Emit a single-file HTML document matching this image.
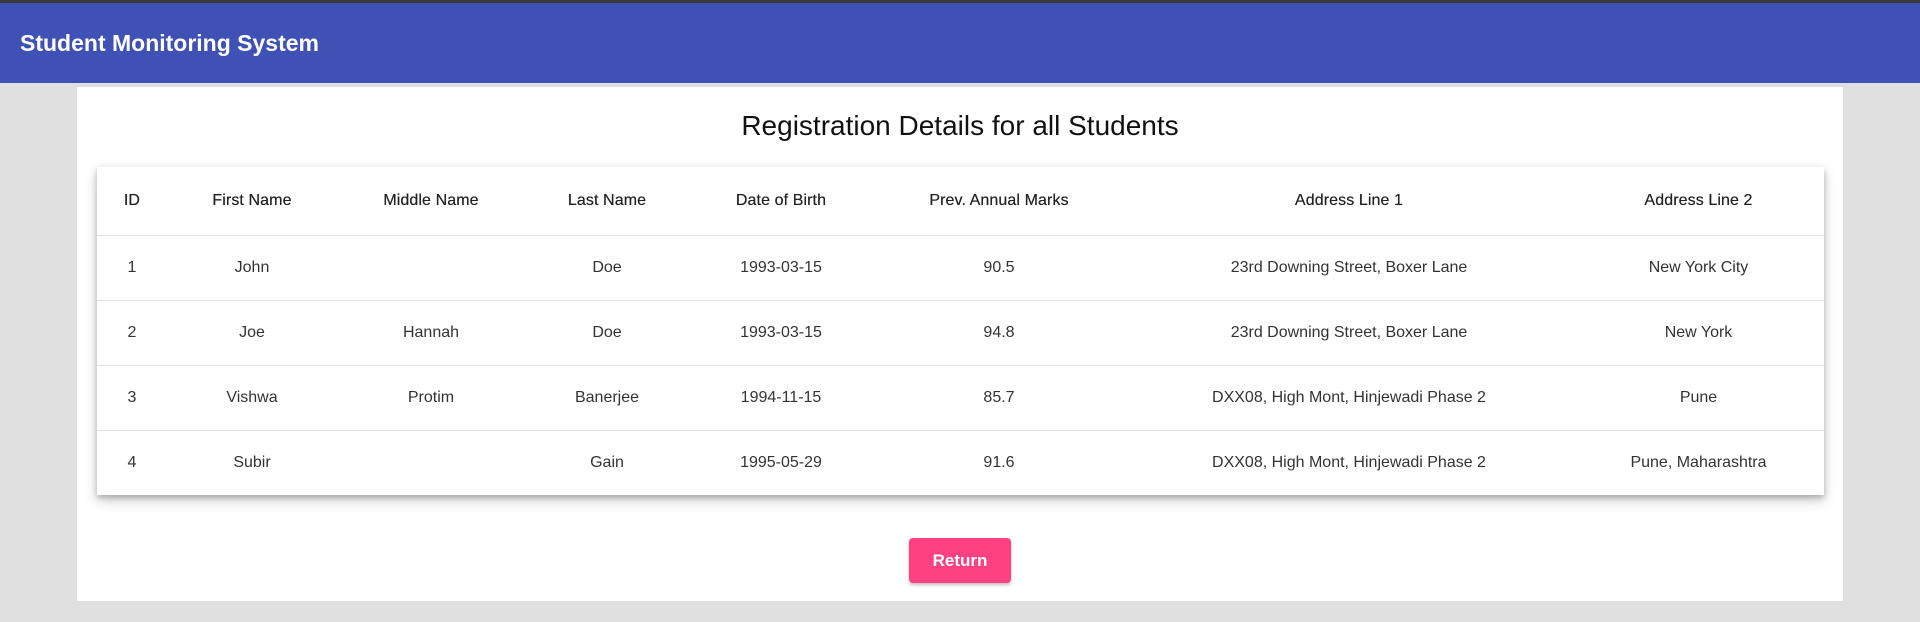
<!DOCTYPE html>
<html><head><meta charset="utf-8"><style>
*{box-sizing:border-box;margin:0;padding:0}
body{width:1920px;height:622px;background:#e0e0e0;font-family:"Liberation Sans",Arial,sans-serif;position:relative;overflow:hidden}
.top{position:absolute;left:0;top:0;width:1920px;height:3px;background:#3a3a3a}
.bar{position:absolute;left:0;top:3px;width:1920px;height:80px;background:#3f51b5;color:#fff;font-size:23px;font-weight:bold;line-height:80px;padding-left:20px}
.card{position:absolute;left:77px;top:87px;width:1766px;height:514px;background:#fff}
h1{position:absolute;left:0;top:107px;width:1920px;text-align:center;font-weight:normal;font-size:28px;color:#111;line-height:38px}
table{position:absolute;left:97px;top:167px;width:1727px;border-collapse:collapse;background:#fff;box-shadow:0 3px 6px rgba(0,0,0,.25),0 6px 14px rgba(0,0,0,.15);table-layout:fixed}
td,th{text-align:center;font-size:16px;color:rgba(0,0,0,.85);border-bottom:1px solid #e0e0e0}
th{height:68px;font-weight:normal;color:#222;letter-spacing:.1px;text-shadow:0 0 .4px #222}
td{height:65px;color:#333}
tr:last-child td{border-bottom:none}
.btn{position:absolute;left:909px;top:538px;width:102px;height:45px;background:#ff4081;color:#fff;border-radius:4px;font-weight:bold;font-size:17px;line-height:45px;text-align:center;box-shadow:0 2px 3px rgba(0,0,0,.25)}
</style></head><body>
<div class="top"></div>
<div class="bar">Student Monitoring System</div>
<div class="card"></div>
<h1>Registration Details for all Students</h1>
<table>
<colgroup><col style="width:70px"><col style="width:170px"><col style="width:188px"><col style="width:164px"><col style="width:184px"><col style="width:252px"><col style="width:448px"><col style="width:251px"></colgroup>
<tr><th>ID</th><th>First Name</th><th>Middle Name</th><th>Last Name</th><th>Date of Birth</th><th>Prev. Annual Marks</th><th>Address Line 1</th><th>Address Line 2</th></tr>
<tr><td>1</td><td>John</td><td></td><td>Doe</td><td>1993-03-15</td><td>90.5</td><td>23rd Downing Street, Boxer Lane</td><td>New York City</td></tr>
<tr><td>2</td><td>Joe</td><td>Hannah</td><td>Doe</td><td>1993-03-15</td><td>94.8</td><td>23rd Downing Street, Boxer Lane</td><td>New York</td></tr>
<tr><td>3</td><td>Vishwa</td><td>Protim</td><td>Banerjee</td><td>1994-11-15</td><td>85.7</td><td>DXX08, High Mont, Hinjewadi Phase 2</td><td>Pune</td></tr>
<tr><td>4</td><td>Subir</td><td></td><td>Gain</td><td>1995-05-29</td><td>91.6</td><td>DXX08, High Mont, Hinjewadi Phase 2</td><td>Pune, Maharashtra</td></tr>
</table>
<div class="btn">Return</div>
</body></html>
